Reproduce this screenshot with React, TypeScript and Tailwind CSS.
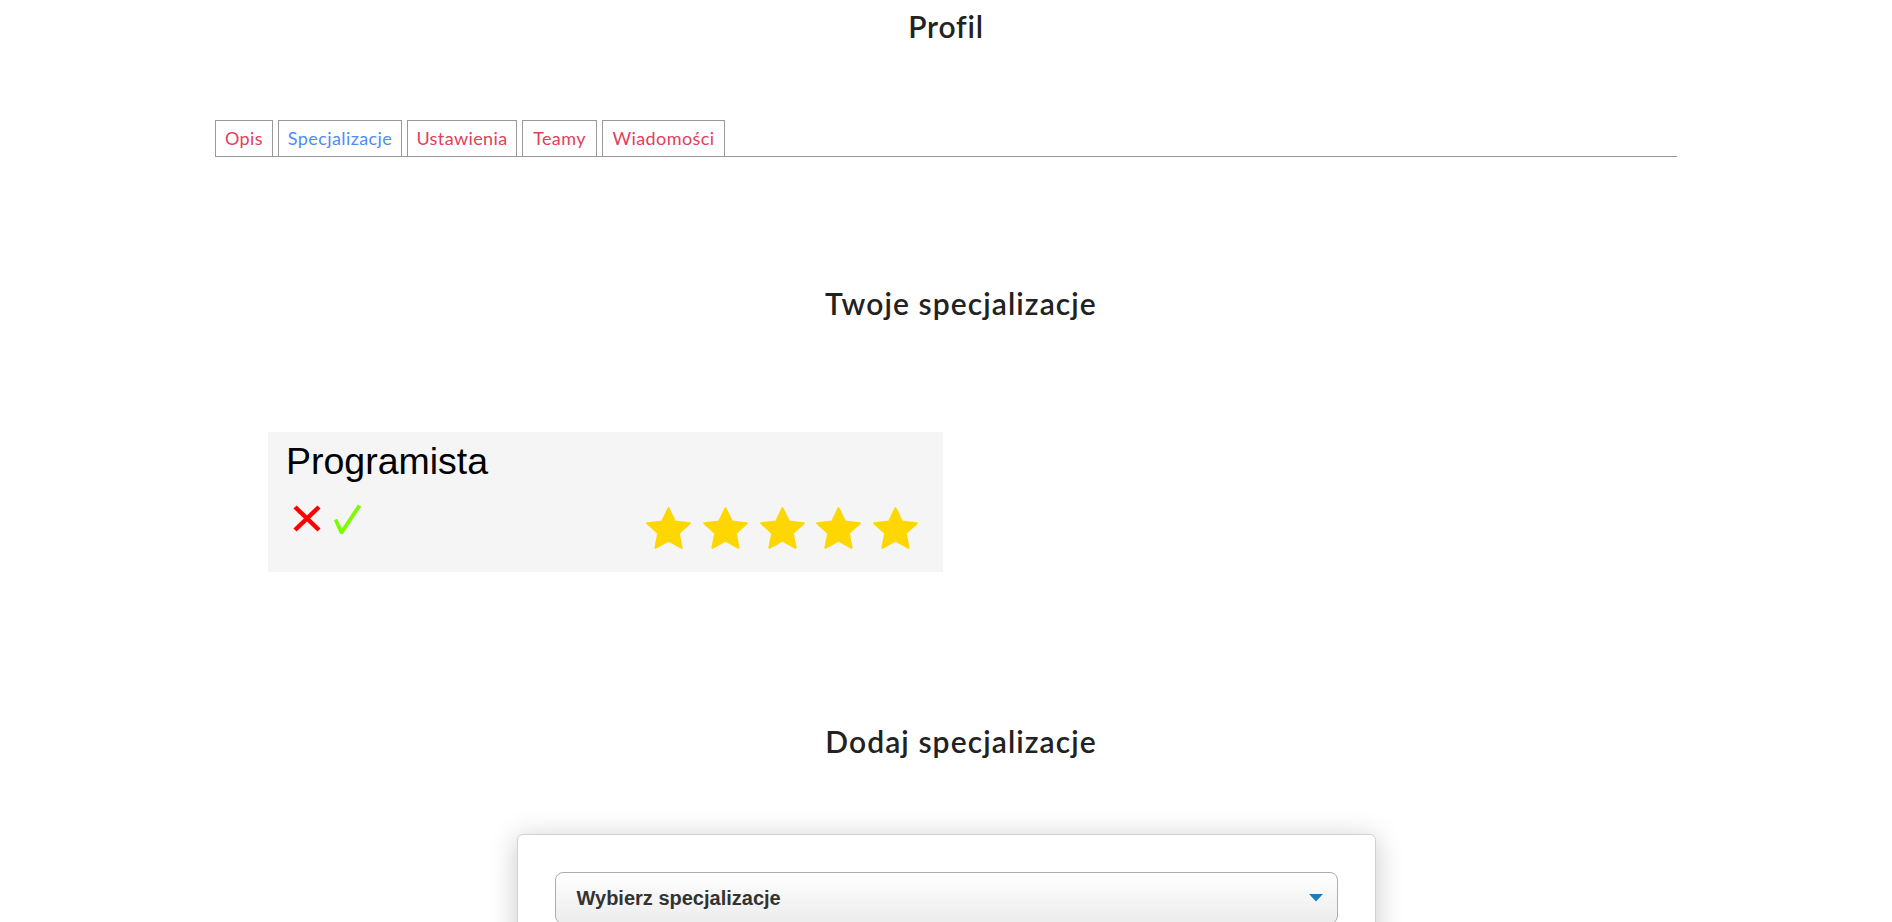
import React from 'react';

const tabs = [
  { label: 'Opis', w: 'w-[58px]', active: false },
  { label: 'Specjalizacje', w: 'w-[124px]', active: true },
  { label: 'Ustawienia', w: 'w-[110px]', active: false },
  { label: 'Teamy', w: 'w-[75px]', active: false },
  { label: 'Wiadomości', w: 'w-[123px]', active: false },
];

const Star: React.FC = () => (
  <svg width="45" height="42" viewBox="1 1 22 21" preserveAspectRatio="none">
    <polygon
      points="12,1.6 15.1,8.2 22.4,9.1 17,14.1 18.4,21.4 12,17.8 5.6,21.4 7,14.1 1.6,9.1 8.9,8.2"
      fill="#ffd700"
      stroke="#ffd700"
      strokeWidth="1"
      strokeLinejoin="round"
    />
  </svg>
);

const Cross: React.FC = () => (
  <svg width="28" height="27" viewBox="0 0 28 27">
    <line x1="2" y1="2" x2="26" y2="25" stroke="#ff0000" strokeWidth="4.5" />
    <line x1="26" y1="2" x2="2" y2="25" stroke="#ff0000" strokeWidth="4.5" />
  </svg>
);

const Check: React.FC = () => (
  <svg width="27" height="30" viewBox="0 0 27 30">
    <path d="M1.5 15.5 L7.5 28.5 L25.5 1.5" fill="none" stroke="#7cfc00" strokeWidth="3.8" strokeLinejoin="miter" />
  </svg>
);

const SkillCard: React.FC<{ name: string; rating: number }> = ({ name, rating }) => (
  <div className="w-[675px] h-[140px] bg-[#f5f5f5] pl-[18px] pr-[18px] pt-[11px]">
    <div className="text-[37.5px] leading-[37px] text-black font-['Liberation_Sans',Arial,sans-serif]">{name}</div>
    <div className="flex items-start justify-between mt-[23px]">
      <div className="flex items-start gap-[13px] ml-[7px]">
        <div className="mt-[2px]">
          <Cross />
        </div>
        <div className="mt-[1px]">
          <Check />
        </div>
      </div>
      <div className="flex items-start gap-[11.7px] mr-[7px] mt-[4px]">
        {Array.from({ length: rating }).map((_, i) => (
          <Star key={i} />
        ))}
      </div>
    </div>
  </div>
);

export default function App() {
  return (
    <div className="min-h-screen bg-white font-['Lato','Open_Sans',sans-serif] text-[#222]">
      <h1 className="pt-[8px] text-center text-[30px] leading-[36px] font-semibold tracking-[0.8px] text-[#222]">Profil</h1>

      <div className="w-[1462px] mx-auto">
        {/* tabs */}
        <ul className="mt-[76px] flex gap-[5px] border-b border-[#999]">
          {tabs.map((t) => (
            <li
              key={t.label}
              className={`${t.w} h-[37px] -mb-px flex items-center justify-center border border-[#999] text-[18px] tracking-[0.4px] ${
                t.active ? 'text-[#4f8cf5]' : 'text-[#e2405a]'
              }`}
            >
              {t.label}
            </li>
          ))}
        </ul>

        <h2 className="mt-[128px] pl-[30px] text-center text-[30px] leading-[36px] font-semibold tracking-[1.1px] text-[#222]">
          Twoje specjalizacje
        </h2>

        <div className="mt-[111px] pl-[53px]">
          <SkillCard name="Programista" rating={5} />
        </div>

        <h2 className="mt-[151px] pl-[30px] text-center text-[30px] leading-[36px] font-semibold tracking-[1.1px] text-[#222]">
          Dodaj specjalizacje
        </h2>
      </div>

      <div className="mt-[75px] mx-auto w-[859px] rounded-[6px] border border-[#d2d2d2] bg-white shadow-[0_4px_28px_rgba(0,0,0,0.22)] px-[37px] pt-[37px] pb-[40px]">
        <div className="h-[52px] flex items-center justify-between rounded-[8px] border border-[#adadad] bg-gradient-to-b from-white to-[#ececec] pl-[21px] pr-[14px]">
          <span className="text-[20px] leading-[23px] font-bold text-[#333] font-['Liberation_Sans',Arial,sans-serif]">
            Wybierz specjalizacje
          </span>
          <svg width="14" height="8" viewBox="0 0 14 8">
            <polygon points="0,0 14,0 7,7.5" fill="#1b7dbd" />
          </svg>
        </div>
        <div className="h-[120px]" />
      </div>
    </div>
  );
}
